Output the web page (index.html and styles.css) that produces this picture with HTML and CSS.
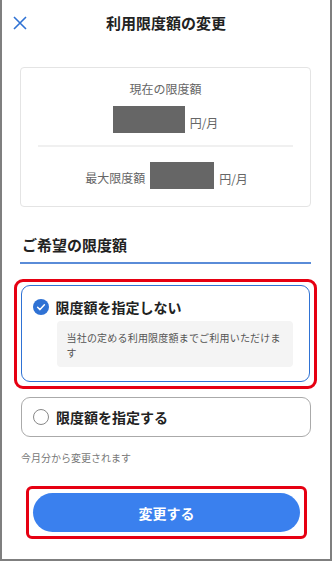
FILE: index.html
```html
<!DOCTYPE html>
<html lang="ja">
<head>
<meta charset="utf-8">
<title>利用限度額の変更</title>
<link rel="stylesheet" href="styles.css">
</head>
<body>
<div class="frame">
  <header class="header">
    <svg class="close" viewBox="0 0 14 14" width="14" height="14"><path d="M1 1 L13 13 M13 1 L1 13" stroke="#2f72d4" stroke-width="1.6" fill="none"/></svg>
    <h1 class="title">利用限度額の変更</h1>
    <span></span>
  </header>
  <main class="main">
    <section class="info">
      <p class="info-label">現在の限度額</p>
      <div class="amount-row">
        <span class="mask mask-current"></span>
        <span class="unit">円/月</span>
      </div>
      <hr class="divider">
      <div class="amount-row max-row">
        <span class="max-label">最大限度額</span>
        <span class="mask mask-max"></span>
        <span class="unit">円/月</span>
      </div>
    </section>

    <h2 class="section-title">ご希望の限度額</h2>

    <div class="highlight">
      <div class="option selected">
        <div class="option-head">
          <svg class="check" viewBox="0 0 16 16" width="16" height="16"><circle cx="8" cy="8" r="8" fill="#2f72d4"/><path d="M4.6 8.3 L7 10.6 L11.4 5.8" stroke="#fff" stroke-width="1.5" fill="none" stroke-linecap="round" stroke-linejoin="round"/></svg>
          <span class="option-label">限度額を指定しない</span>
        </div>
        <p class="option-note">当社の定める利用限度額までご利用いただけます</p>
      </div>
    </div>

    <div class="option unselected">
      <div class="option-head">
        <span class="radio"></span>
        <span class="option-label">限度額を指定する</span>
      </div>
    </div>

    <p class="notice">今月分から変更されます</p>

    <div class="btn-highlight">
      <button class="submit">変更する</button>
    </div>
  </main>
</div>
</body>
</html>
```

FILE: styles.css
```css
* { box-sizing: border-box; }
html, body { margin: 0; padding: 0; background: #fff; }
body {
  font-family: "Noto Sans CJK JP", "Noto Sans", sans-serif;
  color: #222;
}
.frame {
  width: 332px;
  height: 561px;
  border: 2px solid #7f7f7f;
  border-top: none;
  overflow: hidden;
}
.header {
  height: 46px;
  display: grid;
  grid-template-columns: 24px 1fr 24px;
  align-items: center;
  padding: 0 11px;
}
.close { display: block; }
.title {
  margin: 0;
  text-align: center;
  font-size: 15px;
  font-weight: 700;
  line-height: 20px;
  color: #222;
}
.main { padding: 0 19px 0 18px; }
.info {
  margin-top: 21px;
  height: 140px;
  border: 1px solid #e4e4e4;
  border-radius: 4px;
  padding: 12px 17px 0;
}
.info-label {
  margin: 0;
  text-align: center;
  font-size: 12px;
  line-height: 18px;
  color: #666;
}
.amount-row {
  display: flex;
  justify-content: center;
  align-items: flex-end;
  gap: 5px;
  margin-top: 8px;
}
.mask { display: block; height: 27px; background: #666; }
.mask-current { width: 72px; }
.mask-max { width: 64px; }
.unit, .max-label {
  font-size: 12px;
  line-height: 16px;
  color: #666;
  margin-bottom: 2px;
}
.max-label { margin-bottom: 3px; }
.divider {
  border: none;
  border-top: 2px solid #f0f0f0;
  margin: 12px 0 0;
}
.max-row { margin-top: 15px; margin-left: 2px; }
.section-title {
  margin: 27px 0 0;
  padding: 0 0 6px 2px;
  font-size: 15px;
  font-weight: 700;
  line-height: 22px;
  color: #222;
  border-bottom: 2px solid #5a8cd8;
}
.highlight {
  margin: 15px -6px 0;
  border: 3px solid #e60012;
  border-radius: 9px;
  padding: 3px 4px 4px;
}
.option {
  border-radius: 9px;
}
.selected {
  border: 1.5px solid #2f72d4;
  padding: 11px 16px 14px 10.5px;
}
.option-head {
  display: flex;
  align-items: center;
  gap: 7px;
  height: 20px;
}
.option-label {
  font-size: 14px;
  font-weight: 700;
  line-height: 20px;
  color: #222;
}
.check { display: block; flex: none; }
.option-note {
  margin: 4px 0 0 24px;
  background: #f4f4f4;
  border-radius: 4px;
  padding: 9px 6px 7px 10px;
  font-size: 10px;
  line-height: 15px;
  letter-spacing: 0.2px;
  color: #555;
}
.unselected {
  margin: 8px 0 0 1px;
  border: 1px solid #aaa;
  height: 40px;
  padding: 0 11px;
  display: flex;
  align-items: center;
}
.radio {
  display: block;
  width: 16px;
  height: 16px;
  border: 1px solid #888;
  border-radius: 50%;
  flex: none;
}
.notice {
  margin: 13px 0 0 1px;
  font-size: 10px;
  line-height: 16px;
  color: #777;
}
.btn-highlight {
  margin: 20px 4px 0 6px;
  border: 3px solid #e60012;
  border-radius: 6px;
  padding: 4px 4px;
}
.submit {
  display: block;
  width: 100%;
  height: 39px;
  border: none;
  border-radius: 20px;
  background: #3a80ee;
  color: #fff;
  font-family: "Noto Sans CJK JP", "Noto Sans", sans-serif;
  font-size: 14px;
  font-weight: 700;
  padding: 0;
}
```
